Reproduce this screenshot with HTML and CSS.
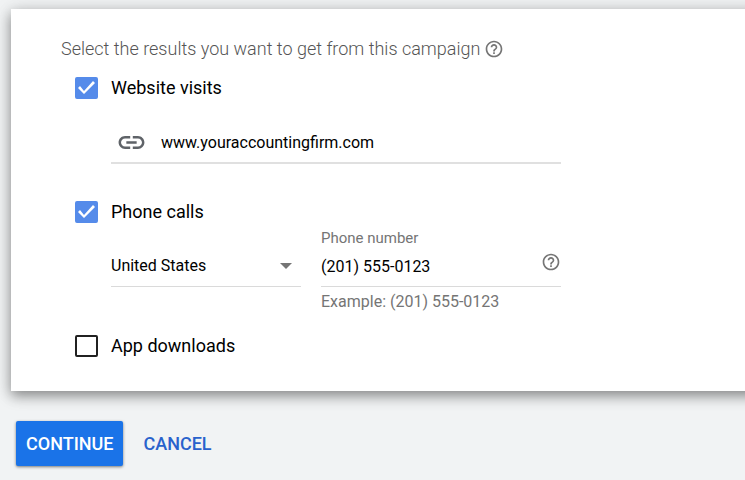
FILE: index.html
```html
<!DOCTYPE html>
<html lang="en">
<head>
  <title>New campaign</title>
  <meta charset="utf-8">
  <meta name="viewport" content="width=device-width, initial-scale=1">
  <link rel="stylesheet" href="styles.css">
</head>
<body>
<form>
  <div class="card">
    <div class="heading">
      <span>Select the results you want to get from this campaign</span>
      <button class="help" type="button" aria-label="Help">
        <svg viewBox="0 0 24 24"><path d="M11 18h2v-2h-2v2zm1-16C6.48 2 2 6.48 2 12s4.48 10 10 10 10-4.48 10-10S17.52 2 12 2zm0 18c-4.41 0-8-3.59-8-8s3.59-8 8-8 8 3.59 8 8-3.59 8-8 8zm0-14c-2.21 0-4 1.79-4 4h2c0-1.1.9-2 2-2s2 .9 2 2c0 2-3 1.75-3 5h2c0-2.25 3-2.5 3-5 0-2.21-1.79-4-4-4z"/></svg>
      </button>
    </div>

    <div class="goals">
      <!-- website visits -->
      <label class="goal"><input type="checkbox" checked>Website visits</label>
      <div class="url">
        <svg class="link-icon" viewBox="0 0 24 24"><path d="M3.9 12c0-1.71 1.39-3.1 3.1-3.1h4V7H7c-2.76 0-5 2.24-5 5s2.24 5 5 5h4v-1.9H7c-1.71 0-3.1-1.39-3.1-3.1zM8 13h8v-2H8v2zm9-6h-4v1.9h4c1.71 0 3.1 1.39 3.1 3.1s-1.39 3.1-3.1 3.1h-4V17h4c2.76 0 5-2.24 5-5s-2.24-5-5-5z"/></svg>
        <input type="text" aria-label="Your website" value="www.youraccountingfirm.com">
      </div>

      <!-- phone calls -->
      <label class="goal"><input type="checkbox" checked>Phone calls</label>
      <div class="phone">
        <div class="country">
          <select aria-label="Country">
            <option>United States</option>
          </select>
        </div>
        <div class="number">
          <label for="phone">Phone number</label>
          <div class="number-field">
            <input id="phone" type="tel" value="(201) 555-0123">
            <button class="help" type="button" aria-label="Help">
              <svg viewBox="0 0 24 24"><path d="M11 18h2v-2h-2v2zm1-16C6.48 2 2 6.48 2 12s4.48 10 10 10 10-4.48 10-10S17.52 2 12 2zm0 18c-4.41 0-8-3.59-8-8s3.59-8 8-8 8 3.59 8 8-3.59 8-8 8zm0-14c-2.21 0-4 1.79-4 4h2c0-1.1.9-2 2-2s2 .9 2 2c0 2-3 1.75-3 5h2c0-2.25 3-2.5 3-5 0-2.21-1.79-4-4-4z"/></svg>
            </button>
          </div>
          <div class="hint">Example: (201) 555-0123</div>
        </div>
      </div>

      <!-- app downloads -->
      <label class="goal"><input type="checkbox">App downloads</label>
    </div>
  </div>

  <div class="actions">
    <button class="continue" type="submit">CONTINUE</button>
    <button class="cancel" type="button">CANCEL</button>
  </div>
</form>
</body>
</html>
```

FILE: styles.css
```css
* {
    box-sizing: border-box;
}

body {
    margin: 0;
    overflow-x: hidden;
    background-color: #f1f3f4;
    color: #000;
    font: 16px/24px Roboto, Arial, sans-serif;
}

button,
input,
select {
    margin: 0;
    padding: 0;
    border: 0;
    background: none;
    color: inherit;
    font: inherit;
}

/* runs past the right edge of the window */
.card {
    margin: 9px -20px 0 11px;
    padding: 28px 50px 33px;
    background-color: #fff;
    box-shadow: 0 5px 12px rgba(0, 0, 0, 0.4), 0 0 20px rgba(0, 0, 0, 0.1);
}

.heading {
    display: flex;
    align-items: center;
    gap: 4px;
    color: #555;
    font-size: 18px;
    font-weight: 300;
}

.help {
    display: flex;
    flex: none;
    color: #757575;
}

.help svg {
    width: 20px;
    height: 20px;
    fill: currentColor;
}

.goals {
    max-width: 500px;
    padding-top: 15px;
}

.goal {
    display: flex;
    align-items: center;
    gap: 13px;
    padding-left: 14px;
    font-size: 18px;
}

.goal input {
    appearance: none;
    width: 23px;
    height: 22px;
    border: 2px solid #212121;
    border-radius: 2px;
}

.goal input:checked {
    border-color: #558bea;
    background-color: #558bea;
}

.goal input:checked::before {
    content: "";
    display: block;
    height: 18px;
    background-color: #fff;
    clip-path: polygon(1px 9px, 3px 7px, 7px 12px, 16px 2px, 18px 4px, 7px 15px);
}

.url,
.phone {
    margin-left: 50px;
}

.url {
    display: flex;
    align-items: center;
    gap: 14px;
    height: 41px;
    margin-top: 23px;
    margin-bottom: 36px;
    padding-left: 5px;
    border-bottom: 2px solid #e0e0e0;
}

.url input,
.number-field input {
    flex: auto;
    min-width: 0;
}

.link-icon {
    flex: none;
    width: 31px;
    height: 31px;
    fill: #5f6368;
}

.phone {
    display: grid;
    grid-template-columns: 190px 1fr;
    align-items: start;
    gap: 20px;
    margin-bottom: 20px;
}

.country {
    display: flex;
    align-items: center;
    height: 41px;
    margin-top: 22px;
    border-bottom: 1px solid #dadada;
}

.country select {
    flex: auto;
    appearance: none;
}

/* drop-down arrow */
.country::after {
    content: "";
    margin-right: 9px;
    border: 6px solid transparent;
    border-top-color: #757575;
    border-bottom: 0;
}

.number {
    padding-top: 2px;
    color: #757575;
}

.number label {
    display: block;
    font-size: 15px;
    line-height: 24px;
}

.number-field {
    display: flex;
    align-items: flex-start;
    height: 37px;
    padding-top: 2px;
    border-bottom: 1px solid #dadada;
    color: #000;
}

.number-field input {
    height: 28px;
}

.hint {
    padding-top: 3px;
}

.actions {
    display: flex;
    gap: 10px;
    padding: 30px 16px 14px;
    font-size: 18px;
    font-weight: 500;
}

.actions button {
    height: 45px;
    padding: 0 10px;
    border-radius: 2px;
}

.continue {
    background-color: #1a73e8;
    box-shadow: 0 1px 3px rgba(0, 0, 0, 0.5);
    color: #fff;
}

.cancel {
    color: #2962cc;
}
```
